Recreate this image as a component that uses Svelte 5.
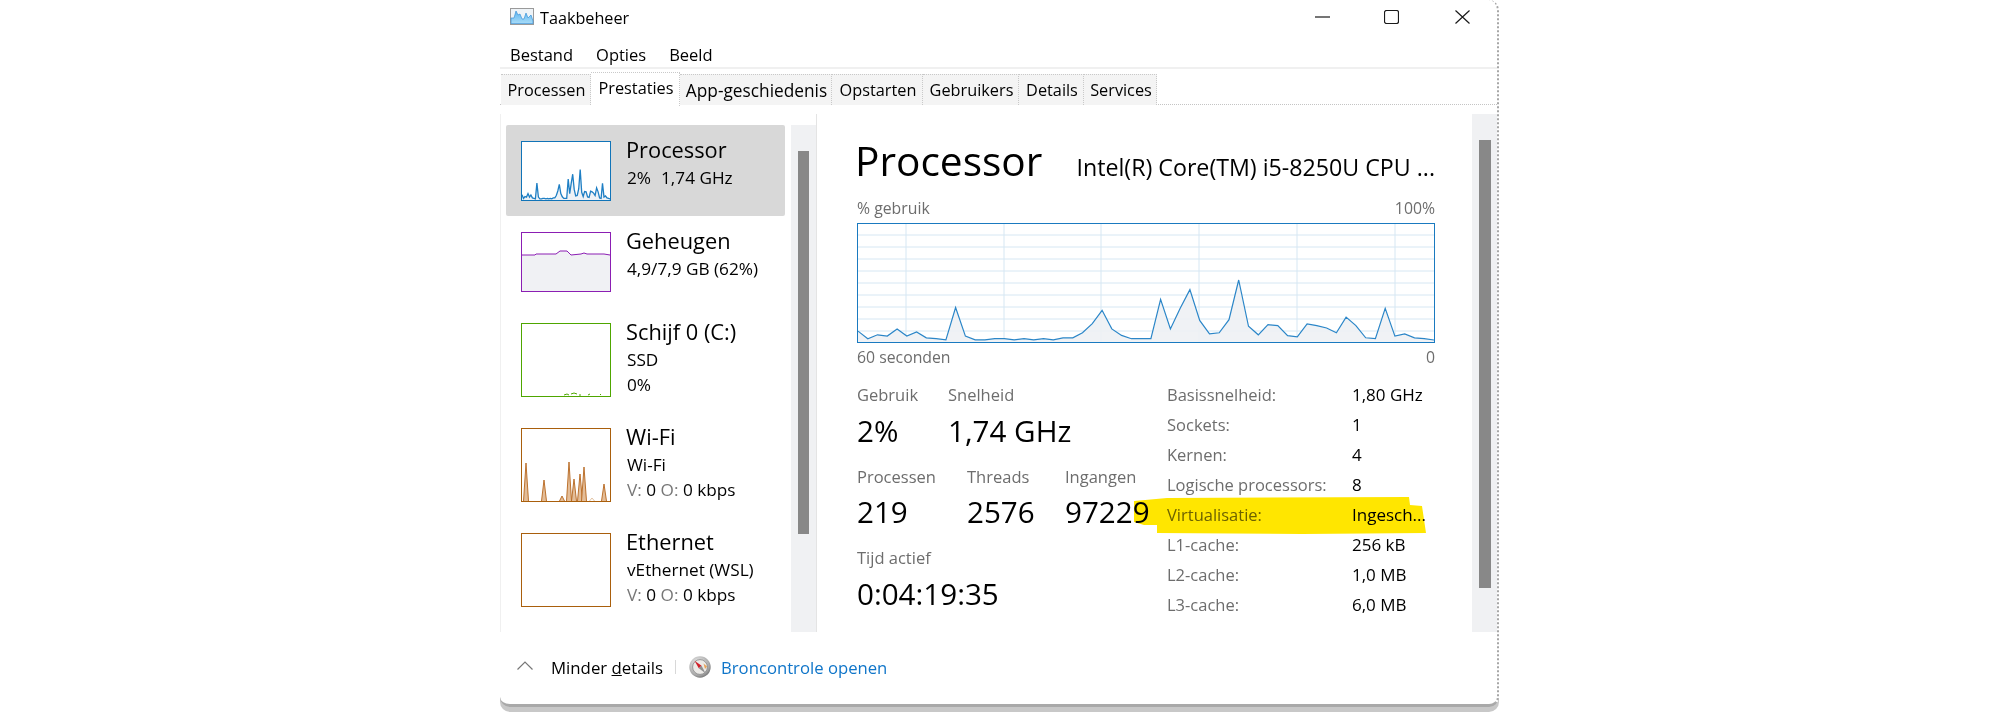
<script lang="ts">
  // cpu usage in %, oldest sample first
  const cpu = [
    9.2, 2.8, 6.1, 5, 11.1, 5, 8.6, 3.6, 2.8, 1.9, 29.2, 5, 1.9, 1.9, 2.8, 2.8, 1.9, 2.8, 1.9, 2.8,
    1.9, 3.6, 3.6, 7.8, 15.6, 26.9, 11.1, 5.6, 2.8, 2.8, 2.8, 36.1, 11.1, 28.6, 44.4, 18.3, 6.9, 7.8,
    18.9, 52.5, 13.3, 6.1, 14.7, 13.9, 5.3, 4.4, 15.3, 13.9, 11.9, 7.8, 21.1, 13.9, 3.6, 2.8, 28.6,
    5, 6.9, 3.6, 2.8, 1.7,
  ];

  function usageLine(w: number, h: number) {
    return cpu
      .map((v, i) => `${((i * w) / (cpu.length - 1)).toFixed(1)},${(h - (v * h) / 100).toFixed(1)}`)
      .join(' ');
  }

  const bigLine = usageLine(576, 118);
  const miniLine = usageLine(88, 58);

  const hGrid = [11, 23, 35, 47, 59, 71, 83, 95, 107];
  const vGrid = [48, 146, 243, 341, 439, 537];

  const memLine = '0,22 13,22 14,21 34,21 38,18 45,18 49,22 59,21 62,20 65,21 82,21 88,22';
  const diskLine = 'M42,57 45,56 47,57 M49,56 52,55 55,56 M57,57 59,57 M66,57 68,56 M78,57 79,56';
  const wifiPeaks = [
    [4, 38],
    [22, 21],
    [40, 5],
    [47, 39],
    [52, 22],
    [58, 27],
    [62, 34],
    [82, 17],
  ];
  const spike = (x: number, y: number) => `M${x - 2.5},58 L${x},${58 - y} L${x + 2.5},58`;

  const tabs = ['Processen', 'Prestaties', 'App-geschiedenis', 'Opstarten', 'Gebruikers', 'Details', 'Services'];

  const specs = [
    ['Basissnelheid:', '1,80 GHz'],
    ['Sockets:', '1'],
    ['Kernen:', '4'],
    ['Logische processors:', '8'],
    ['Virtualisatie:', 'Ingesch...'],
    ['L1-cache:', '256 kB'],
    ['L2-cache:', '1,0 MB'],
    ['L3-cache:', '6,0 MB'],
  ];
</script>

<div class="page">
  <div class="window">
    <header class="titlebar">
      <svg class="app-icon" viewBox="0 0 24 17" aria-hidden="true">
        <defs>
          <linearGradient id="appfill" x1="0" y1="0" x2="0" y2="1">
            <stop offset="0" stop-color="#5db4ee" />
            <stop offset="1" stop-color="#a8dcf8" />
          </linearGradient>
        </defs>
        <rect x="0.5" y="0.5" width="23" height="16" fill="#eef3f7" stroke="#9a9a9a" />
        <path d="M1,15.5 V10 L4,10 L6,3 L8,7 L10,6 L12,11 L14,11 L16,5 L18,10 L21,7 L23,13 V15.5 Z" fill="url(#appfill)" stroke="#3c94d8" stroke-width="0.7" />
      </svg>
      <span class="title">Taakbeheer</span>
      <div class="controls">
        <svg class="min" viewBox="0 0 15 2" aria-hidden="true"><path d="M0,1 H15" /></svg>
        <svg class="max" viewBox="0 0 15 14" aria-hidden="true"><rect x="0.5" y="0.5" width="14" height="13" rx="2" /></svg>
        <svg class="close" viewBox="0 0 15 14" aria-hidden="true"><path d="M0.5,0.5 L14.5,13.5 M14.5,0.5 L0.5,13.5" /></svg>
      </div>
    </header>

    <nav class="menubar">
      <span>Bestand</span>
      <span>Opties</span>
      <span>Beeld</span>
    </nav>

    <div class="tabs">
      {#each tabs as tab}
        <div class="tab" class:active={tab === 'Prestaties'}>{tab}</div>
      {/each}
    </div>

    <div class="content">
      <aside class="sidebar">
        <div class="list">
          <div class="row selected">
            <div class="mini cpu">
              <svg viewBox="0 0 88 58" aria-hidden="true">
                <polygon points="0,58 {miniLine} 88,58" fill="#eef2f6" />
                <polyline points={miniLine} fill="none" stroke="#1f7fc4" stroke-width="1.3" />
              </svg>
            </div>
            <div class="info">
              <div class="name">Processor</div>
              <div class="sub"><span class="gap">2%</span>1,74 GHz</div>
            </div>
          </div>

          <div class="row">
            <div class="mini mem">
              <svg viewBox="0 0 88 58" aria-hidden="true">
                <polygon points="0,58 {memLine} 88,58" fill="#f0f1f4" />
                <polyline points={memLine} fill="none" stroke="#8b1eb3" stroke-width="1" />
              </svg>
            </div>
            <div class="info">
              <div class="name">Geheugen</div>
              <div class="sub">4,9/7,9 GB (62%)</div>
            </div>
          </div>

          <div class="row">
            <div class="mini disk tall">
              <svg viewBox="0 0 88 72" aria-hidden="true">
                <path d={diskLine} transform="translate(0 14)" fill="none" stroke="#4ea600" stroke-width="1" />
              </svg>
            </div>
            <div class="info">
              <div class="name">Schijf 0 (C:)</div>
              <div class="sub">SSD</div>
              <div class="sub">0%</div>
            </div>
          </div>

          <div class="row">
            <div class="mini net tall">
              <svg viewBox="0 0 88 72" aria-hidden="true">
                <g transform="translate(0 14)">
                  {#each wifiPeaks as [x, y]}
                    <path d={spike(x, y)} fill="#e3bd98" stroke="#b5651d" stroke-width="0.9" />
                  {/each}
                  <path d={spike(70, 3)} fill="none" stroke="#e2c4a4" stroke-width="1" />
                </g>
              </svg>
            </div>
            <div class="info">
              <div class="name">Wi-Fi</div>
              <div class="sub">Wi-Fi</div>
              <div class="sub"><span class="dim">V:</span> 0 <span class="dim">O:</span> 0 kbps</div>
            </div>
          </div>

          <div class="row">
            <div class="mini net tall"></div>
            <div class="info">
              <div class="name">Ethernet</div>
              <div class="sub">vEthernet (WSL)</div>
              <div class="sub"><span class="dim">V:</span> 0 <span class="dim">O:</span> 0 kbps</div>
            </div>
          </div>
        </div>
        <div class="track side-track"><div class="thumb side-thumb"></div></div>
      </aside>

      <main class="panel">
        <div class="detail">
          <div class="head">
            <h1>Processor</h1>
            <span class="model">Intel(R) Core(TM) i5-8250U CPU ...</span>
          </div>

          <div class="axis top"><span>% gebruik</span><span>100%</span></div>
          <div class="graph">
            <svg viewBox="0 0 576 118" aria-hidden="true">
              {#each hGrid as y}
                <line x1="0" x2="576" y1={y} y2={y} />
              {/each}
              {#each vGrid as x}
                <line x1={x} x2={x} y1="0" y2="118" />
              {/each}
              <polygon class="area" points="0,118 {bigLine} 576,118" />
              <polyline class="usage" points={bigLine} />
            </svg>
          </div>
          <div class="axis bottom"><span>60 seconden</span><span>0</span></div>

          <div class="stats">
            <div class="live">
              <div class="stat-row first">
                <div class="stat w-usage"><div class="label">Gebruik</div><div class="value">2%</div></div>
                <div class="stat"><div class="label">Snelheid</div><div class="value">1,74 GHz</div></div>
              </div>
              <div class="stat-row second">
                <div class="stat w-proc"><div class="label">Processen</div><div class="value">219</div></div>
                <div class="stat w-thr"><div class="label">Threads</div><div class="value">2576</div></div>
                <div class="stat"><div class="label">Ingangen</div><div class="value">97229</div></div>
              </div>
              <div class="stat-row third">
                <div class="stat"><div class="label">Tijd actief</div><div class="value">0:04:19:35</div></div>
              </div>
            </div>
            <div class="specs">
              {#each specs as [key, val]}
                <div class="spec-key">{key}</div>
                <div class="spec-val">{val}</div>
              {/each}
            </div>
          </div>
        </div>
        <div class="track main-track"><div class="thumb main-thumb"></div></div>

        <!-- marker stroke drawn over the screenshot -->
        <svg class="marker" viewBox="0 0 293 37" preserveAspectRatio="none" aria-hidden="true">
          <path d="M0,4 L33,1 L275,0 L276,8 L288,9 L292,36 L168,37 L23,36 L23,28 L10,28 L0,25 Z" />
        </svg>
      </main>
    </div>

    <footer class="footer">
      <svg class="chevron" viewBox="0 0 16 9" aria-hidden="true"><path d="M0.5,8.5 L8,1 L15.5,8.5" /></svg>
      <span class="less">Minder <u>d</u>etails</span>
      <span class="divider"></span>
      <svg class="compass" viewBox="0 0 22 22" aria-hidden="true">
        <defs>
          <radialGradient id="ring" cx="0.4" cy="0.35" r="0.75">
            <stop offset="0" stop-color="#f4f4f4" />
            <stop offset="0.7" stop-color="#a9a9a9" />
            <stop offset="1" stop-color="#5f5f5f" />
          </radialGradient>
        </defs>
        <circle cx="11" cy="11" r="10.7" fill="url(#ring)" />
        <circle cx="11" cy="11" r="7.4" fill="#eceae7" stroke="#7d7d7d" stroke-width="0.7" />
        <path d="M5.5,4.8 L12.6,9.8 L9.8,12.2 Z" fill="#d0202a" />
        <path d="M16.5,17.2 L12.6,9.8 L9.8,12.2 Z" fill="#8f8f8f" />
        <path d="M14.5,7.5 L18,10.5 L16,13 Z" fill="#e8963f" opacity="0.85" />
      </svg>
      <span class="link">Broncontrole openen</span>
    </footer>
  </div>
</div>

<style>
  :global(body) {
    margin: 0;
    background: #fff;
  }

  .page {
    width: 2000px;
    height: 712px;
    overflow: hidden;
    font-family: "Open Sans", "Noto Sans", sans-serif;
    color: #000;
  }

  .window {
    width: 997px;
    height: 704px;
    margin-left: 500px;
    display: flex;
    flex-direction: column;
    background: #fff;
    border-right: 2px dotted #a6a6a6;
    border-bottom: 3px solid #a9a9a9;
    border-radius: 0 10px 10px 10px;
    box-shadow: 0 5px 0 #c8c8c8;
  }

  .titlebar {
    height: 34px;
    flex: none;
    display: flex;
    align-items: center;
    padding-left: 10px;
  }

  .app-icon {
    width: 24px;
    height: 17px;
    margin-top: -1px;
  }

  .title {
    margin: 2px 0 0 6px;
    font-size: 16.2px;
    line-height: 32px;
  }

  .controls {
    margin-left: auto;
    display: flex;
    align-items: center;
    padding-right: 27px;
  }

  .controls svg {
    fill: none;
    stroke: #1a1a1a;
    stroke-width: 1.2;
  }

  .min {
    width: 15px;
    height: 2px;
  }

  .max {
    width: 15px;
    height: 14px;
    margin-left: 54px;
  }

  .close {
    width: 15px;
    height: 14px;
    margin-left: 56px;
  }

  .menubar {
    height: 33px;
    flex: none;
    box-sizing: border-box;
    display: flex;
    gap: 23px;
    align-items: center;
    padding: 7px 0 0 10px;
    font-size: 16.5px;
  }

  .tabs {
    height: 38px;
    flex: none;
    box-sizing: border-box;
    padding: 5px 0 0 1px;
    display: grid;
    grid-template-columns: 90px 89px 152px 91px 96px 65px 73px;
    border-top: 2px solid #f0f0f0;
    border-bottom: 1px dotted #c4c4c4;
  }

  .tab {
    height: 31px;
    box-sizing: border-box;
    display: flex;
    align-items: center;
    justify-content: center;
    padding-left: 2px;
    white-space: nowrap;
    font-size: 16.3px;
    background: #f4f4f4;
    border: 1px dotted #c9c9c9;
    border-left: 0;
    border-bottom: 0;
  }

  .tab:nth-child(3) {
    font-size: 17.3px;
  }

  .tab.active {
    height: 34px;
    margin-top: -2px;
    padding-bottom: 3px;
    background: #fff;
    position: relative;
  }

  .content {
    height: 527px;
    flex: none;
    display: flex;
    padding-top: 9px;
    box-sizing: border-box;
  }

  .sidebar {
    width: 316px;
    flex: none;
    display: flex;
    border-left: 1px solid #f0f0f0;
    box-sizing: border-box;
  }

  .list {
    width: 290px;
    flex: none;
    box-sizing: border-box;
    padding: 11px 6px 0 5px;
  }

  .row {
    display: flex;
    gap: 15px;
    padding: 16px 0 15px 15px;
    border-radius: 2px;
  }

  .row.selected {
    background: #d8d8d8;
  }

  .mini {
    width: 90px;
    height: 60px;
    flex: none;
    box-sizing: border-box;
    background: #fff;
    border: 1px solid;
  }

  .mini.tall {
    height: 74px;
  }

  .mini svg {
    display: block;
    width: 88px;
    height: 100%;
  }

  .cpu {
    border-color: #1174b8;
  }

  .mem {
    border-color: #8b1eb3;
  }

  .disk {
    border-color: #4ea600;
  }

  .net {
    border-color: #a95f0c;
  }

  .info {
    margin: -6px 0 -10px;
    white-space: nowrap;
  }

  .name {
    font-size: 21.8px;
    line-height: 30px;
  }

  .sub {
    font-size: 17.2px;
    line-height: 25px;
    padding-left: 1px;
  }

  .gap {
    margin-right: 10px;
  }

  .dim {
    color: #777;
  }

  .track {
    flex: none;
    width: 25px;
    box-sizing: border-box;
    background: #f0f1f3;
  }

  .side-track {
    margin-top: 11px;
    padding: 26px 0 0 7px;
  }

  .main-track {
    padding: 26px 0 0 7px;
  }

  .thumb {
    width: 11px;
    background: #888;
  }

  .side-thumb {
    height: 383px;
  }

  .main-thumb {
    width: 12px;
    height: 448px;
  }

  .panel {
    flex: 1;
    display: flex;
    position: relative;
    min-width: 0;
  }

  .detail {
    flex: 1;
    min-width: 0;
    padding: 19px 37px 0 40px;
    border-left: 1px solid #e4e4e4;
    box-sizing: border-box;
  }

  .head {
    display: flex;
    align-items: baseline;
    justify-content: space-between;
    height: 56px;
    margin-left: -2px;
    white-space: nowrap;
  }

  h1 {
    margin: 0;
    font-size: 40.6px;
    font-weight: 400;
    line-height: 56px;
  }

  .model {
    font-size: 23.2px;
  }

  .axis {
    display: flex;
    justify-content: space-between;
    font-size: 15.8px;
    line-height: 22px;
    color: #6d6d6d;
  }

  .axis.top {
    margin: 8px 0 4px;
  }

  .axis.bottom {
    margin-top: 3px;
  }

  .graph {
    height: 120px;
    box-sizing: border-box;
    border: 1px solid #1a7ac0;
  }

  .graph svg {
    display: block;
    width: 576px;
    height: 118px;
  }

  .graph line {
    stroke: #d6e7f3;
    stroke-width: 1;
  }

  .area {
    fill: #eef1f4;
    fill-opacity: 0.9;
  }

  .usage {
    fill: none;
    stroke: #2b86c8;
    stroke-width: 1.2;
  }

  .stats {
    display: flex;
    margin-top: 12px;
  }

  .live {
    width: 310px;
    flex: none;
  }

  .stat-row {
    display: flex;
  }

  .stat-row.second {
    margin-top: 11px;
  }

  .stat-row.third {
    margin-top: 11px;
  }

  .w-usage {
    width: 91px;
  }

  .w-proc {
    width: 110px;
  }

  .w-thr {
    width: 98px;
  }

  .label {
    font-size: 16.5px;
    line-height: 30px;
    color: #6d6d6d;
  }

  .value {
    font-size: 29.6px;
    line-height: 41px;
    white-space: nowrap;
  }

  .second .value {
    line-height: 40px;
  }

  .specs {
    display: grid;
    grid-template-columns: 185px auto;
    grid-auto-rows: 30px;
    align-items: center;
    margin-top: -1px;
    font-size: 16.5px;
    white-space: nowrap;
    position: relative;
  }

  .spec-key {
    color: #6d6d6d;
  }

  .spec-val {
    font-size: 17px;
  }

  .marker {
    position: absolute;
    left: 318px;
    top: 383px;
    width: 293px;
    height: 37px;
    mix-blend-mode: multiply;
    pointer-events: none;
  }

  .marker path {
    fill: #ffe600;
  }

  .footer {
    flex: 1;
    display: flex;
    align-items: center;
    padding: 0 0 2px 17px;
    box-sizing: border-box;
  }

  .chevron {
    width: 16px;
    height: 9px;
    margin-top: -4px;
    fill: none;
    stroke: #777;
    stroke-width: 1.2;
  }

  .less {
    margin-left: 18px;
    font-size: 16.8px;
  }

  .divider {
    width: 1px;
    height: 14px;
    margin-left: 12px;
    background: #d8d8d8;
  }

  .compass {
    width: 22px;
    height: 22px;
    margin-left: 13px;
  }

  .link {
    margin-left: 10px;
    font-size: 16.7px;
    color: #0f75c9;
  }
</style>
